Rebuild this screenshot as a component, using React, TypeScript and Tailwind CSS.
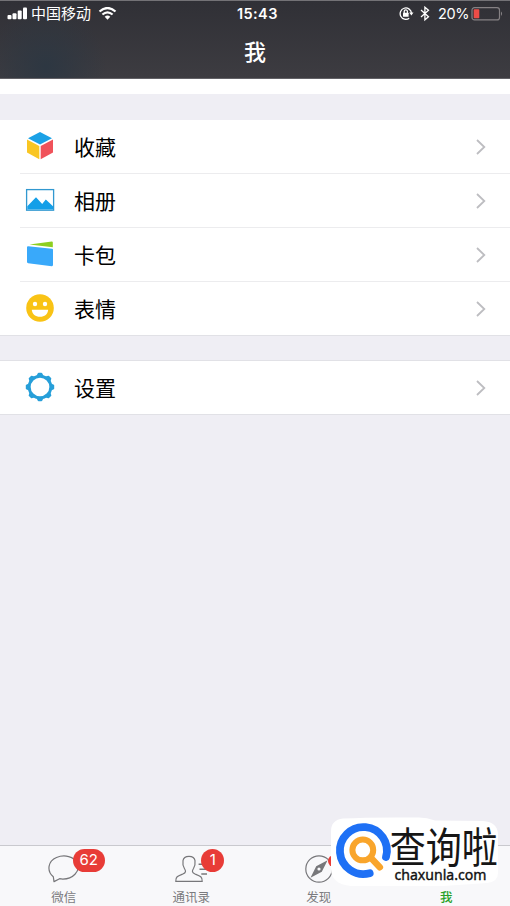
import type { ReactNode } from "react";

const gearTeeth = [0, 45, 90, 135, 180, 225, 270, 315];

function CubeIcon() {
  return (
    <svg width="28" height="28" viewBox="0 0 28 28">
      <path d="M14 0 26 6.2 14 12.6 2 6.2Z" fill="#1ba1e6" />
      <path d="M1 7.6 13.3 14V27.2L1 20.6Z" fill="#f9c623" />
      <path d="M27 7.6 14.7 14V27.2L27 20.6Z" fill="#f0525a" />
    </svg>
  );
}

function AlbumIcon() {
  return (
    <svg width="30" height="24" viewBox="0 0 30 24">
      <rect x="1.6" y="1.6" width="27" height="20.6" fill="#fff" stroke="#3198d0" strokeWidth="1.3" />
      <path d="M2.3 18.2 11 9.2 17.2 15.9 20.8 11.6 28 18.3V21.6H2.3Z" fill="#149fe8" />
    </svg>
  );
}

function CardIcon() {
  return (
    <svg width="28" height="26" viewBox="0 0 28 26">
      <path d="M3.5 3.6 25.8.4Q26.8.3 26.8 1.4V6.2Z" fill="#8dcf20" />
      <path d="M2.2 5.2 26 7.7Q27 7.8 27 8.8V24.1Q27 25.3 25.8 25.2L2.2 22.2Q1 22 1 21V6.2Q1 5.1 2.2 5.2Z" fill="#39a9fa" />
    </svg>
  );
}

function SmileIcon() {
  return (
    <svg width="28" height="28" viewBox="0 0 28 28">
      <circle cx="14" cy="14" r="13.8" fill="#f9c315" />
      <circle cx="9" cy="10" r="2.2" fill="#fff" />
      <circle cx="19" cy="10" r="2.2" fill="#fff" />
      <path d="M5.8 15.7H22.2C21.8 20.1 18.6 22.7 14 22.7S6.2 20.1 5.8 15.7Z" fill="#fff" />
    </svg>
  );
}

function GearIcon() {
  return (
    <svg width="30" height="30" viewBox="0 0 30 30">
      <circle cx="15" cy="15" r="10.8" fill="none" stroke="#279fd9" strokeWidth="2.9" />
      {gearTeeth.map((angle) => (
        <path key={angle} d="M11.2 4.4 12.8 1.2Q13 .8 13.6.8H16.4Q17 .8 17.2 1.2L18.8 4.4Z" fill="#279fd9" transform={`rotate(${angle} 15 15)`} />
      ))}
    </svg>
  );
}

function Row({ icon, label, divided = false }: { icon: ReactNode; label: string; divided?: boolean }) {
  return (
    <div className={`flex bg-white pl-5 ${divided ? "h-[54px]" : "h-[53px]"}`}>
      <div className={`flex flex-1 items-center ${divided ? "border-b border-[#ececee]" : ""}`}>
        <div className="flex w-10 justify-center pb-px">{icon}</div>
        <span className="ml-[14px] pb-px text-[21px] leading-none text-black">{label}</span>
        <svg className="mr-[22px] ml-auto" width="13" height="18" viewBox="0 0 13 18">
          <path d="M2 2 9.3 9 2 16" fill="none" stroke="#bdbdc1" strokeWidth="1.8" />
        </svg>
      </div>
    </div>
  );
}

function StatusBar() {
  return (
    <div className="flex h-[25px] items-center pl-[7px] text-white">
      <svg width="21" height="14" viewBox="0 0 21 14" fill="#fff">
        <rect x=".5" y="8.1" width="4" height="4.2" rx="1" />
        <rect x="5.5" y="6.3" width="4" height="6" rx="1" />
        <rect x="10.7" y="3.5" width="4" height="8.8" rx="1" />
        <rect x="16" y=".5" width="4" height="11.8" rx="1" />
      </svg>
      <span className="ml-[3px] w-[60px] pb-[2px] text-[15px] leading-none whitespace-nowrap">中国移动</span>
      <svg className="ml-[7px]" width="19" height="14" viewBox="0 0 19 14">
        <path d="M1.5 4.5Q9.5-2.5 17.5 4.5M4.4 7.5Q9.5 3.1 14.6 7.5" fill="none" stroke="#fff" strokeWidth="2.2" />
        <path d="M6.7 9.8Q9.5 7.4 12.3 9.8L9.5 12.7Z" fill="#fff" />
      </svg>
      <span className="ml-[120px] w-[42px] pt-px font-[Inter] text-[14.5px] leading-none font-semibold tracking-[0.4px]">15:43</span>
      <svg className="ml-[120px]" width="15" height="14" viewBox="0 0 15 14" fill="none" stroke="#fff" strokeWidth="1.3">
        <path d="M10.2 11.3A5.7 5.7 0 1 1 12.5 5.8" />
        <path d="M10.2 5.5H14.5L12.4 8.4Z" fill="#fff" stroke="none" />
        <rect x="4" y="5.7" width="5.6" height="4" rx=".5" fill="#fff" stroke="none" />
        <path d="M5.2 5.9V4.5A1.6 1.6 0 0 1 8.4 4.5V5.9" />
      </svg>
      <svg className="ml-[6px]" width="10" height="16" viewBox="0 0 10 16">
        <path d="M1 4 8.5 10.8 4.9 13.8V1.2L8.5 4.2 1 11" fill="none" stroke="#fff" strokeWidth="1.3" />
      </svg>
      <span className="ml-[8px] w-[30px] pt-px font-[Inter] text-[14.5px] leading-none tracking-[-0.4px]">20%</span>
      <svg className="ml-[3px]" width="33" height="14" viewBox="0 0 33 14">
        <rect x="1" y=".7" width="27.5" height="12.2" rx="2.5" fill="none" stroke="#858184" strokeWidth="1.2" />
        <rect x="2.7" y="2.3" width="5.6" height="9" rx=".8" fill="#ee4c47" />
        <path d="M30 4.6Q32.2 6.8 30 9Z" fill="#858184" />
      </svg>
    </div>
  );
}

function ChatIcon() {
  return (
    <svg width="32" height="28" viewBox="0 0 32 28">
      <path d="M5.3 21.7C-1.8 15.6.2 6 8.5 2.5 16.2-.7 26.3 1.2 29.3 8.4 32.6 16.4 24.7 24.2 14.7 24.1L11.6 23.7 6 26.6Z" fill="none" stroke="#77777a" strokeWidth="1.2" strokeLinejoin="round" />
    </svg>
  );
}

function ContactsIcon() {
  return (
    <svg width="34" height="28" viewBox="0 0 34 28" fill="none" stroke="#77777a" strokeWidth="1.2">
      <path d="M1.8 26.4C1.3 21.6 4.2 20.8 8.8 19 12.3 17.7 11.9 15.7 10.4 13.5 8.9 11.2 8.6 8.4 9 5.7 9.8-.1 20.2-.1 21 5.7 21.4 8.7 20.8 11.4 19.5 13.5 18 15.8 17.7 17.7 21 19 25.7 20.8 28.7 21.6 28.2 26.4Z" />
      <path d="M24.6 9.2H33M25.5 14.3H33M27.3 19H33" strokeWidth="1.5" />
    </svg>
  );
}

function CompassIcon() {
  return (
    <svg width="28" height="28" viewBox="0 0 28 28">
      <circle cx="14" cy="14" r="13.2" fill="none" stroke="#77777a" strokeWidth="1.2" />
      <path fillRule="evenodd" d="M22.6 5.2 16.8 16.7 5.5 22.8 11.2 11.2ZM15.6 14A1.6 1.6 0 1 0 12.4 14 1.6 1.6 0 1 0 15.6 14Z" fill="#77777a" />
    </svg>
  );
}

function Tab({ label, active = false, children }: { label: string; active?: boolean; children?: ReactNode }) {
  return (
    <div className="flex flex-1 flex-col items-center pt-[9px]">
      <div className="relative flex h-7 items-center justify-center">{children}</div>
      <span className={`mt-[7px] text-[12.5px] leading-[14px] ${active ? "font-medium text-[#28a128]" : "text-[#7b7b7e]"}`}>{label}</span>
    </div>
  );
}

function Watermark() {
  return (
    <div className="absolute top-[815px] left-[329px]">
      <svg width="172" height="74" viewBox="0 0 172 74" overflow="visible">
        <path d="M14 3.5Q40 2 90 2.5 98 2.5 106 5.5L154 6Q169 7 169 20V58Q169 67 158 68L114 71H22Q2 69 2 54V16Q2 5 14 3.5Z" fill="#fff" />
        <path d="M40.7 58.2A23.5 23.5 0 1 1 57 42" fill="none" stroke="#1e70f5" strokeWidth="7.8" strokeLinecap="round" />
        <circle cx="33.8" cy="34.9" r="10.4" fill="#fff" stroke="#f9a52b" strokeWidth="6" />
        <path d="M43 44 50.8 52.2" stroke="#f9a52b" strokeWidth="6.6" strokeLinecap="round" />
        <text transform="translate(60.8 48.2) scale(.9 1.06)" fontSize="40" fontWeight="400" fontFamily="Noto Sans CJK SC, sans-serif" fill="#161616">查询啦</text>
        <text x="65.5" y="65" fontSize="15" textLength="92" lengthAdjust="spacingAndGlyphs" fontFamily="Noto Sans, sans-serif" fontWeight="400" fill="#111" stroke="#111" strokeWidth=".4">chaxunla.com</text>
      </svg>
    </div>
  );
}

export default function App() {
  return (
    <div className="relative flex h-[906px] w-[510px] flex-col overflow-hidden bg-[#efeef4] font-['Noto_Sans_CJK_SC',sans-serif]">
      <header className="flex h-[79px] shrink-0 flex-col border-t border-b border-t-[#737276] border-b-[#626166] bg-[radial-gradient(circle_at_9%_85%,#2d3742_0px,transparent_60px),linear-gradient(#303036,#3d3c41)]">
        <StatusBar />
        <h1 className="mt-[12px] text-center text-[22px] leading-6 font-medium text-white">我</h1>
      </header>
      <div className="h-[15px] shrink-0 bg-white" />
      <div className="h-[26px] shrink-0" />
      <section className="shrink-0 border-b border-[#e1e1e6]">
        <Row icon={<CubeIcon />} label="收藏" divided />
        <Row icon={<AlbumIcon />} label="相册" divided />
        <Row icon={<CardIcon />} label="卡包" divided />
        <Row icon={<SmileIcon />} label="表情" />
      </section>
      <div className="h-[24px] shrink-0" />
      <section className="shrink-0 border-y border-[#e1e1e6]">
        <Row icon={<GearIcon />} label="设置" />
      </section>
      <div className="flex-1" />
      <nav className="flex h-[61px] shrink-0 border-t border-[#c9c9ce] bg-[#f8f8fa]">
        <Tab label="微信">
          <ChatIcon />
          <span className="absolute -top-[6px] left-[25px] flex h-[23px] w-[32px] items-center justify-center rounded-full bg-[#e83c37] font-[Inter] text-[15px] text-white">62</span>
        </Tab>
        <Tab label="通讯录">
          <ContactsIcon />
          <span className="absolute -top-[6px] left-[27px] flex size-[23px] items-center justify-center rounded-full bg-[#e83c37] font-[Inter] text-[15px] text-white">1</span>
        </Tab>
        <Tab label="发现">
          <CompassIcon />
          <span className="absolute top-0 left-[23px] size-3 rounded-full bg-[#e83c37]" />
        </Tab>
        <Tab label="我" active />
      </nav>
      <Watermark />
    </div>
  );
}
